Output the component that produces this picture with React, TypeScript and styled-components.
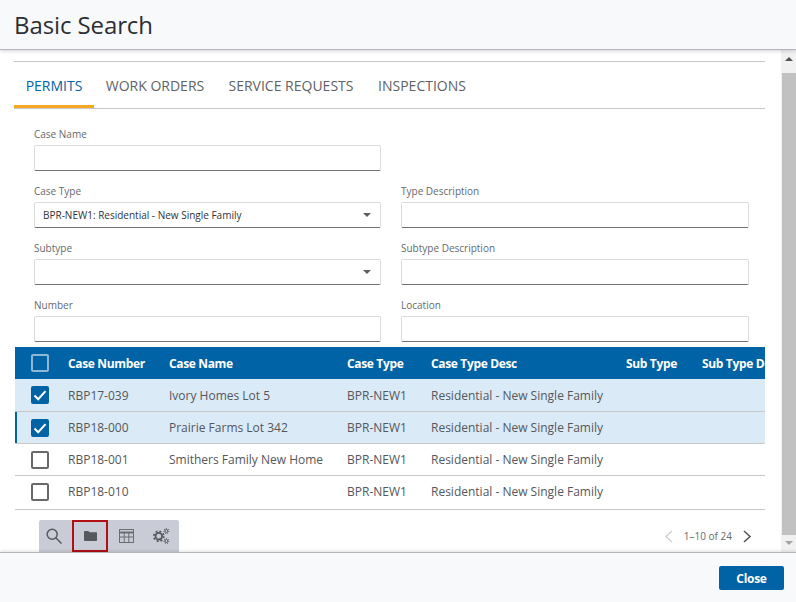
import React from "react";
import styled, { createGlobalStyle } from "styled-components";

const Global = createGlobalStyle`
  html, body { margin: 0; padding: 0; background: #fff; }
  body { font-family: "Open Sans", "Liberation Sans", sans-serif; }
  * { box-sizing: border-box; }
`;

const Dialog = styled.div`
  width: 796px; height: 602px; display: flex; flex-direction: column; overflow: hidden; background: #fff;
`;
const Header = styled.header`
  height: 50px; flex: none; background: #f8f9fb; border-bottom: 1px solid #b4b5ba;
  box-shadow: 0 1px 4px rgba(0,0,0,.18); padding-left: 14px; position: relative; z-index: 2;
`;
const Title = styled.h1`
  margin: 0; font-size: 24px; line-height: 49px; font-weight: 400; color: #2b2f33; letter-spacing: -0.1px;
`;
const Body = styled.div`
  flex: 1; min-height: 0; display: flex;
`;
const Content = styled.main`
  width: 781px; flex: none; padding: 11px 16px 0 14px; overflow: hidden;
`;
const Tabs = styled.nav`
  height: 48px; display: flex; border-top: 1px solid #c8c8c8; border-bottom: 1px solid #c8c8c8;
`;
const Tab = styled.div<{ $active?: boolean; $w: number }>`
  width: ${(p) => p.$w}px; height: 46px; line-height: 47px; text-align: center; font-size: 14px;
  color: ${(p) => (p.$active ? "#0063a5" : "#5f6266")};
  border-bottom: 3px solid ${(p) => (p.$active ? "#f5a623" : "transparent")};
  white-space: nowrap;
`;
const Form = styled.section`
  display: grid; grid-template-columns: 347px 348px; column-gap: 20px;
  row-gap: 11px; padding: 16px 0 0 20px;
`;
const Field = styled.div`
  height: 46px;
`;
const Label = styled.div`
  height: 20px; font-size: 10px; line-height: 18px; color: #66696d;
`;
const Input = styled.div`
  height: 26px; background: #fff; border: 1px solid #dcdcdc; border-bottom: 1px solid #6e7073;
  border-radius: 2px; display: flex; align-items: center; justify-content: space-between;
  padding: 0 9px 0 8px; font-size: 10px; color: #2f3336;
`;
const Caret = styled.span`
  width: 0; height: 0; border-left: 4px solid transparent; border-right: 4px solid transparent;
  border-top: 4px solid #5c5f63; margin-left: auto;
`;
const Table = styled.section`
  margin: 5px 0 0 1px; width: 750px; overflow: hidden;
`;
const columns = "53px 101px 178px 84px 195px 76px 200px";
const HeadRow = styled.div`
  display: grid; grid-template-columns: ${columns}; width: 887px; height: 32px; align-items: center;
  background: #0063a5; color: #fff; font-size: 12px; font-weight: 700; letter-spacing: -0.35px; white-space: nowrap;
`;
const Row = styled.div<{ $selected?: boolean; $focus?: boolean; $h: number; $pb?: number }>`
  display: grid; grid-template-columns: ${columns}; width: 887px; height: ${(p) => p.$h}px; align-items: center;
  padding-bottom: ${(p) => p.$pb ?? 0}px;
  background: ${(p) => (p.$selected ? "#dbeaf7" : "#fff")};
  border-bottom: 1px solid #c6c8cb;
  font-size: 12px; color: #54575b; white-space: nowrap;
  box-shadow: ${(p) => (p.$focus ? "inset 2px 0 0 #0063a5" : "none")};
`;
const CheckCell = styled.div`
  padding-left: 16px; display: flex; align-items: center;
`;
const Box = styled.span<{ $checked?: boolean; $head?: boolean }>`
  width: 18px; height: 18px; border-radius: 2px; display: flex; align-items: center; justify-content: center;
  background: ${(p) => (p.$checked ? "#0063a5" : "transparent")};
  border: 2px solid ${(p) => (p.$checked ? "#0063a5" : p.$head ? "#8db7d4" : "#67696d")};
`;
const Bottom = styled.div`
  display: flex; justify-content: space-between; align-items: flex-start; padding: 10px 13px 0 25px; width: 751px;
`;
const Toolbar = styled.div`
  display: flex; height: 32px; width: 140px; background: #c9ccd6; border-radius: 2px 2px 0 0;
`;
const ToolButton = styled.div<{ $marked?: boolean; $w: number; $pr?: number }>`
  width: ${(p) => p.$w}px; flex: none; height: 32px; display: flex; align-items: center; justify-content: center;
  padding-right: ${(p) => p.$pr ?? 0}px;
  border: ${(p) => (p.$marked ? "2px solid #b20e16" : "none")};
`;
const Pager = styled.div`
  display: flex; align-items: center; height: 32px; font-size: 10px; color: #66696d; gap: 11px;
`;
const Scrollbar = styled.aside`
  width: 15px; flex: none; background: #f1f1f1; display: flex; flex-direction: column; align-items: center;
`;
const ScrollArrow = styled.span<{ $up?: boolean }>`
  flex: none; width: 0; height: 0; border-left: 4px solid transparent; border-right: 4px solid transparent;
  ${(p) => (p.$up ? "border-bottom: 4px solid #505050; margin: 7px 0 12px;" : "border-top: 4px solid #a3a3a3; margin: 6px 0 7px;")}
`;
const Thumb = styled.div`
  flex: 1; width: 14px; background: #c1c1c1;
`;
const Footer = styled.footer`
  height: 50px; flex: none; background: #f8f9fb; border-top: 1px solid #b4b5ba;
  box-shadow: 0 -1px 3px rgba(0,0,0,.12); display: flex; justify-content: flex-end; align-items: flex-start;
  padding: 13px 12px 0 0; position: relative; z-index: 2;
`;
const CloseButton = styled.button`
  width: 65px; height: 24px; border: 0; border-radius: 2px; background: #0063a5; color: #fff; padding: 0;
  font-family: inherit; font-size: 12px; font-weight: 700; letter-spacing: -0.3px;
`;

const Tick = () => (
  <svg width="14" height="14" viewBox="0 0 14 14" fill="none">
    <path d="M1.5 7.5l3.7 3.7L12.5 3.2" stroke="#fff" strokeWidth="2" />
  </svg>
);

const rows = [
  { n: "RBP17-039", name: "Ivory Homes Lot 5", sel: true, h: 33 },
  { n: "RBP18-000", name: "Prairie Farms Lot 342", sel: true, focus: true, h: 32 },
  { n: "RBP18-001", name: "Smithers Family New Home", h: 32 },
  { n: "RBP18-010", name: "", h: 34, pb: 2 },
];

export default function App() {
  return (
    <Dialog>
      <Global />
      <Header><Title>Basic Search</Title></Header>
      <Body>
        <Content>
          <Tabs>
            <Tab $active $w={80}>PERMITS</Tab>
            <Tab $w={122}>WORK ORDERS</Tab>
            <Tab $w={150}>SERVICE REQUESTS</Tab>
            <Tab $w={112}>INSPECTIONS</Tab>
          </Tabs>
          <Form>
            <Field><Label>Case Name</Label><Input /></Field>
            <div />
            <Field><Label>Case Type</Label><Input>BPR-NEW1: Residential - New Single Family<Caret /></Input></Field>
            <Field><Label>Type Description</Label><Input /></Field>
            <Field><Label>Subtype</Label><Input><Caret /></Input></Field>
            <Field><Label>Subtype Description</Label><Input /></Field>
            <Field><Label>Number</Label><Input /></Field>
            <Field><Label>Location</Label><Input /></Field>
          </Form>
          <Table>
            <HeadRow>
              <CheckCell><Box $head /></CheckCell>
              <div>Case Number</div><div>Case Name</div><div>Case Type</div><div>Case Type Desc</div><div>Sub Type</div><div>Sub Type Desc</div>
            </HeadRow>
            {rows.map((r) => (
              <Row key={r.n} $selected={r.sel} $focus={r.focus} $h={r.h} $pb={r.pb}>
                <CheckCell><Box $checked={r.sel}>{r.sel && <Tick />}</Box></CheckCell>
                <div>{r.n}</div><div>{r.name}</div><div>BPR-NEW1</div><div>Residential - New Single Family</div><div /><div />
              </Row>
            ))}
          </Table>
          <Bottom>
            <Toolbar>
              <ToolButton $w={33} $pr={3}>
                <svg width="16" height="16" viewBox="0 0 16 16" fill="none" stroke="#55585c" strokeWidth="1.5"><circle cx="6.2" cy="6.2" r="5" /><path d="M9.8 9.8l5.7 5.7" /></svg>
              </ToolButton>
              <ToolButton $marked $w={36}>
                <svg width="13" height="10" viewBox="0 0 13 10" fill="#55585c"><path d="M0 1C0 .4.4 0 1 0h3.4l1.2 1.3H12c.6 0 1 .4 1 1V9c0 .6-.4 1-1 1H1c-.6 0-1-.4-1-1z" /></svg>
              </ToolButton>
              <ToolButton $w={36}>
                <svg width="15" height="14" viewBox="0 0 15 14" fill="none" stroke="#6a6d72" strokeWidth="1"><rect x=".5" y=".5" width="14" height="13" /><path d="M0 3.5h15" strokeWidth="2" /><path d="M.5 8h14M5.2 3v11M9.8 3v11" /></svg>
              </ToolButton>
              <ToolButton $w={35}>
                <svg width="17" height="16" viewBox="0 0 17 16" fill="none" stroke="#55585c">
                  <circle cx="5.8" cy="8.2" r="3.3" strokeWidth="1.8" />
                  <circle cx="5.8" cy="8.2" r="5" strokeWidth="1.6" strokeDasharray="2 1.93" />
                  <circle cx="13.4" cy="3" r="1.5" strokeWidth="1" />
                  <circle cx="13.4" cy="3" r="2.5" strokeWidth="1" strokeDasharray="1.1 1.1" />
                  <circle cx="13.4" cy="13" r="1.5" strokeWidth="1" />
                  <circle cx="13.4" cy="13" r="2.5" strokeWidth="1" strokeDasharray="1.1 1.1" />
                </svg>
              </ToolButton>
            </Toolbar>
            <Pager>
              <svg width="9" height="13" viewBox="0 0 9 13" fill="none" stroke="#cfd0d3" strokeWidth="1.5"><path d="M8 1L2 6.5 8 12" /></svg>
              <span>1–10 of 24</span>
              <svg width="9" height="13" viewBox="0 0 9 13" fill="none" stroke="#55585c" strokeWidth="1.6"><path d="M1 1l6 5.5L1 12" /></svg>
            </Pager>
          </Bottom>
        </Content>
        <Scrollbar>
          <ScrollArrow $up />
          <Thumb />
          <ScrollArrow />
        </Scrollbar>
      </Body>
      <Footer><CloseButton>Close</CloseButton></Footer>
    </Dialog>
  );
}
